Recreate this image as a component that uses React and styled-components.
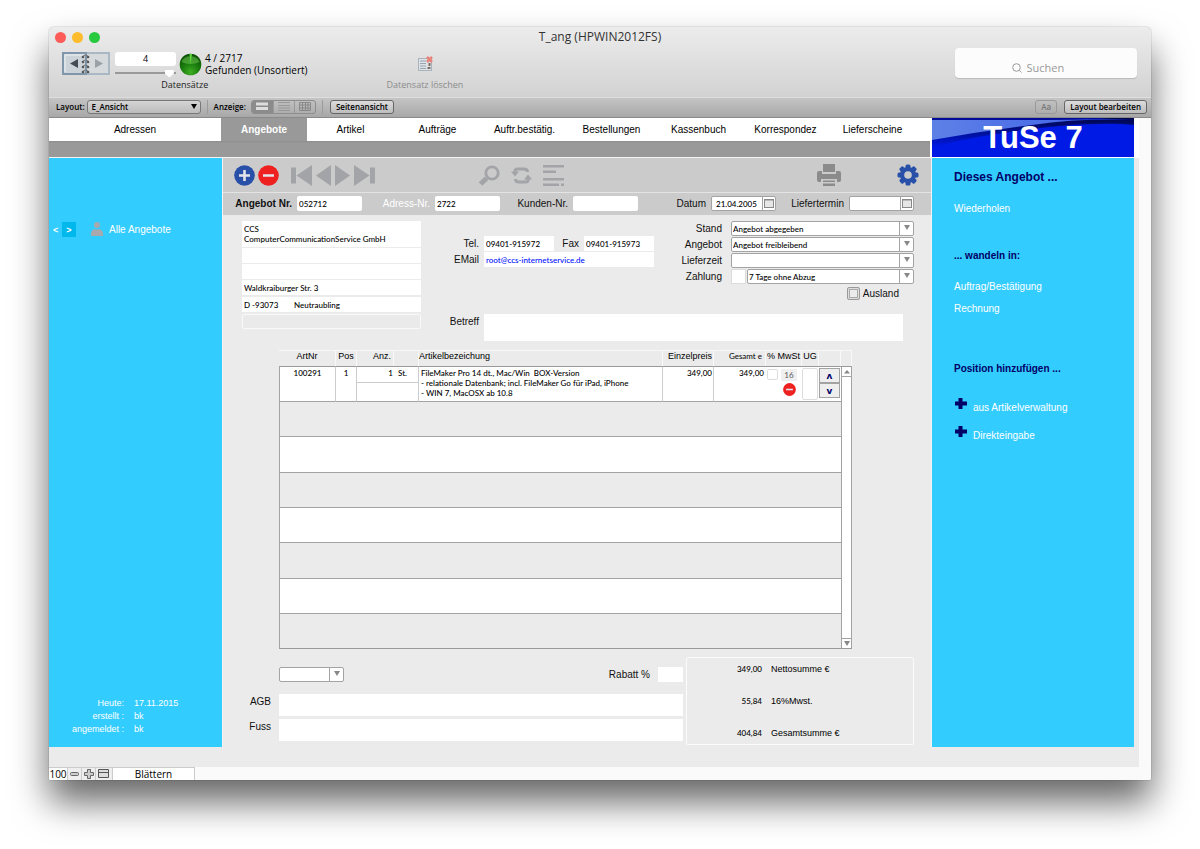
import React from 'react';
import styled, { createGlobalStyle, css } from 'styled-components';

const colors = {
  cyan: '#33ccff',
  navy: '#000066',
  panel: '#ebebeb',
  bar: '#cbcbcb',
  tab: '#999999',
  line: '#a3a3a3',
  icon: '#a3a4a7',
  blue: '#2850a8',
  red: '#ee2020',
};

const fonts = {
  label: '"Liberation Sans", Arial, sans-serif',
  field: 'Lato, "Open Sans", sans-serif',
  system: '"Open Sans", "Noto Sans", sans-serif',
};

const GlobalStyle = createGlobalStyle`
  * { box-sizing: border-box; }
  body {
    margin: 0;
    background: #fff;
    color: #000;
    font: 9px/12px ${fonts.label};
  }
  button, input, select, textarea {
    margin: 0;
    padding: 0;
    border: 0;
    border-radius: 0;
    outline: 0;
    background: none;
    color: inherit;
    font: inherit;
  }
  a { color: inherit; text-decoration: none; }
`;

const StyledPage = styled.div`
  padding: 27px 49px 69px;
`;
const StyledWindow = styled.div`
  overflow: hidden;
  border-radius: 5px 5px 2px 2px;
  background: ${colors.panel};
`;
const StyledShadow = styled.div`
  border-radius: 5px 5px 2px 2px;
  box-shadow: 0 0 1px rgba(0, 0, 0, 0.7), 0 22px 36px rgba(0, 0, 0, 0.6);
`;

/* window head */
const StyledHead = styled.header`
  height: 70px;
  background: linear-gradient(#ececec, #d2d2d2);
  font-family: ${fonts.system};
`;
const StyledTitleRow = styled.div`
  display: grid;
  grid-template-columns: 1fr auto 1fr;
  align-items: center;
  height: 20px;
  padding: 0 6px;
`;
const StyledLights = styled.div`
  display: flex;
  gap: 6px;
`;
const StyledLight = styled.button`
  width: 11px;
  height: 11px;
  border-radius: 50%;
  background: ${({ $color }) => $color};
`;
const StyledTitle = styled.h1`
  margin: 0;
  color: #333;
  font-size: 12px;
  font-weight: 400;
`;
const StyledTools = styled.div`
  display: flex;
  align-items: flex-start;
  padding: 4px 14px 0 13px;
`;
const StyledToolGroup = styled.div`
  display: flex;
  flex-direction: column;
  align-items: center;
  margin-right: 79px;
`;
const StyledToolRow = styled.div`
  display: flex;
  align-items: center;
  gap: 3px;
  height: 26px;
`;
const StyledToolLabel = styled.span`
  font-size: 9px;
  line-height: 16px;
  color: ${({ $muted }) => ($muted ? '#8c8c8c' : '#222')};
`;
const StyledRecord = styled.div`
  display: flex;
  flex-direction: column;
  gap: 3px;
  width: 61px;
  margin-left: 2px;
`;
const StyledRecordInput = styled.input`
  width: 100%;
  height: 14px;
  border-radius: 3px;
  background: #fff;
  text-align: center;
  font-size: 9px;
`;
const StyledRange = styled.input`
  width: 100%;
  height: 8px;
  appearance: none;
  &::-webkit-slider-runnable-track {
    height: 2px;
    background: #999;
  }
  &::-webkit-slider-thumb {
    appearance: none;
    width: 9px;
    height: 8px;
    margin-top: -2px;
    background: #fff;
    clip-path: polygon(0 0, 100% 0, 100% 50%, 50% 100%, 0 50%);
  }
`;
const StyledFound = styled.div`
  font-size: 10px;
  line-height: 12px;
`;
const StyledSearch = styled.label`
  display: flex;
  align-items: center;
  justify-content: center;
  gap: 5px;
  width: 182px;
  height: 30px;
  margin: -3px 0 0 auto;
  padding-top: 10px;
  border-radius: 4px;
  background: #fcfcfc;
  box-shadow: 0 1px 1px rgba(0, 0, 0, 0.15);
`;
const StyledSearchInput = styled.input`
  width: 54px;
  font-size: 11px;
  &::placeholder {
    color: #999;
  }
`;

/* layout bar */
const StyledLayoutBar = styled.div`
  display: flex;
  align-items: center;
  height: 21px;
  padding: 0 4px 2px 7px;
  border-top: 1px solid #dedede;
  border-bottom: 1px solid #8a8a8a;
  background: linear-gradient(#c4c4c4, #a8a8a8);
  font: 600 8px/12px ${fonts.system};
`;
const StyledLayoutSelect = styled.span`
  display: flex;
  align-items: center;
  width: 114px;
  height: 14px;
  margin-left: 2px;
  padding: 0 3px 0 4px;
  border: 1px solid #777;
  border-radius: 3px;
  background: linear-gradient(#d4d4d4, #bcbcbc);
  select {
    flex: 1;
    appearance: none;
  }
`;
const StyledDivider = styled.span`
  width: 1px;
  height: 14px;
  margin: 0 6px;
  background: #9b9b9b;
`;
const StyledSegments = styled.div`
  display: flex;
  height: 14px;
  margin-left: 5px;
  border: 1px solid #8d8d8d;
  border-radius: 3px;
  overflow: hidden;
`;
const StyledSegment = styled.button`
  display: flex;
  align-items: center;
  justify-content: center;
  width: 21px;
  background: ${({ $active }) => ($active ? '#8b8b8b' : 'transparent')};
  & + & {
    border-left: 1px solid #999;
  }
`;
const StyledBarButton = styled.button`
  height: 14px;
  margin-left: ${({ $left }) => $left || '1px'};
  padding: 0 5px;
  border: 1px solid ${({ $muted }) => ($muted ? '#999' : '#666')};
  border-radius: 3px;
  background: ${({ $muted }) => ($muted ? 'transparent' : 'linear-gradient(#dcdcdc, #bdbdbd)')};
  color: ${({ $muted }) => ($muted ? '#777' : '#000')};
  white-space: nowrap;
`;

/* workspace */
const StyledWorkspace = styled.div`
  display: grid;
  grid-template-columns: 173px 1fr 203px 5px 12px;
  grid-template-rows: 40px auto 20px;
`;
const StyledNav = styled.nav`
  grid-column: 1 / 3;
  display: flex;
  align-items: flex-start;
  border-bottom: 1px solid #f4f4f4;
  border-right: 1px solid #fff;
  background: linear-gradient(#fff 23px, #8d8d8d 23px, ${colors.tab} 25px);
`;
const StyledTab = styled.a`
  width: 87px;
  height: 23px;
  font-size: 10px;
  line-height: 23px;
  text-align: center;
  ${({ $wide }) => $wide && css`
    width: 172px;
  `}
  ${({ $active }) => $active && css`
    width: 86px;
    background: ${colors.tab};
    color: #fff;
    font-weight: 700;
  `}
`;
const StyledLogo = styled.div`
  position: relative;
  border-bottom: 1px solid #fff;
  border-left: 1px solid #fff;
  background: #001ae5;
  color: #fff;
  font-weight: 700;
  font-size: 31px;
  line-height: 39px;
  text-align: center;
  svg {
    position: absolute;
    inset: 0;
    width: 100%;
    height: 100%;
  }
  span {
    position: relative;
  }
`;
const StyledGutter = styled.div`
  background: #fff;
`;
const StyledScrollTrack = styled.div`
  grid-column: 5;
  grid-row: 1 / 4;
  background: #fafafa;
`;
const StyledSide = styled.aside`
  display: flex;
  flex-direction: column;
  background: ${colors.cyan};
  color: #fff;
`;
const StyledFilter = styled.div`
  display: flex;
  align-items: center;
  gap: 4px;
  margin-top: 64px;
  padding-left: 4px;
  font-size: 10px;
`;
const StyledStep = styled.button`
  width: ${({ $active }) => ($active ? '14px' : '5px')};
  height: 15px;
  background: ${({ $active }) => ($active ? '#00b8ec' : 'transparent')};
  font-size: 9px;
  font-weight: 700;
`;
const StyledFilterLink = styled.a`
  display: flex;
  align-items: center;
  gap: 6px;
  margin-left: 11px;
`;
const StyledSession = styled.dl`
  display: grid;
  grid-template-columns: 75px 1fr;
  gap: 1px 10px;
  margin: auto 0 12px;
  dt { text-align: right; }
  dd { margin: 0; }
`;
const StyledActions = styled(StyledSide)`
  align-items: flex-start;
  padding-left: 22px;
  border-left: 1px solid #f4f4f4;
  font-size: 10px;
`;
const StyledActionTitle = styled.h2`
  margin: ${({ $top }) => $top} 0 0;
  color: ${colors.navy};
  font-size: ${({ $large }) => ($large ? '12px' : '10px')};
  line-height: 14px;
`;
const StyledAction = styled.a`
  display: flex;
  align-items: flex-end;
  gap: 6px;
  margin-top: ${({ $top }) => $top};
  line-height: 12px;
`;

/* record form */
const StyledMain = styled.main`
  min-width: 0;
  border-left: 1px solid #f4f4f4;
  background: ${colors.panel};
`;
const StyledIconBar = styled.div`
  display: flex;
  align-items: center;
  height: 35px;
  padding: 0 12px 0 11px;
  border-bottom: 1px solid #e4e4e4;
  background: ${colors.bar};
`;
const StyledIconGroup = styled.div`
  display: flex;
  align-items: center;
  gap: ${({ $gap }) => $gap};
  margin-left: ${({ $left }) => $left || '0'};
`;
const StyledIconButton = styled.button`
  display: flex;
`;
const StyledKeyBar = styled.div`
  display: grid;
  grid-template-columns: 69px 65px 63px 65px 63px 65px 1fr 65px 63px 65px;
  column-gap: 5px;
  align-items: start;
  height: 22px;
  padding: 3px 17px 0 0;
  background: ${colors.bar};
`;
const StyledLabel = styled.label`
  flex: none;
  color: ${({ $light }) => ($light ? '#fff' : '#111')};
  font-size: 10px;
  font-weight: ${({ $strong }) => ($strong ? 700 : 400)};
  line-height: 15px;
  text-align: right;
  white-space: nowrap;
`;
const fieldText = css`
  font-family: ${fonts.field};
  font-size: 8px;
  font-weight: 500;
`;
const StyledInput = styled.input`
  ${fieldText}
  width: 100%;
  min-width: 0;
  height: ${({ $height }) => $height || '15px'};
  padding: 0 2px;
  border-radius: ${({ $round }) => ($round ? '2px' : '0')};
  background: #fff;
  color: ${({ $link }) => ($link ? '#0011ff' : '#000')};
`;
const StyledCombo = styled.span`
  ${fieldText}
  display: flex;
  flex: 1;
  min-width: 0;
  height: 15px;
  border: 1px solid ${colors.line};
  border-radius: 2px;
  background: #fff;
  select {
    flex: 1;
    min-width: 0;
    padding-left: 1px;
    appearance: none;
  }
`;
const StyledComboEnd = styled.span`
  display: flex;
  justify-content: center;
  flex: none;
  width: 14px;
  padding-top: 3px;
  border-left: 1px solid ${colors.line};
`;
const StyledDateInput = styled.input`
  width: 50px;
  min-width: 0;
  padding-left: 4px;
`;
const StyledDateButton = styled.button`
  display: flex;
  align-items: center;
  justify-content: center;
  flex: 1;
  border-left: 1px solid ${colors.line};
`;
const StyledForm = styled.section`
  display: flex;
  padding: 6px 17px 0 19px;
`;
const StyledAddress = styled.div`
  display: flex;
  flex: none;
  flex-direction: column;
  gap: 1px;
  width: 179px;
`;
const StyledAddressText = styled.textarea`
  ${fieldText}
  height: 26px;
  padding: 3px 2px;
  background: #fff;
  line-height: 10px;
  resize: none;
  overflow: hidden;
`;
const StyledTown = styled.div`
  display: grid;
  grid-template-columns: 50px 1fr;
  margin: 1px 0;
  background: #fff;
`;
const StyledExtra = styled(StyledInput)`
  border: 1px solid #f9f9f9;
  border-radius: 2px;
  background: #eaeaea;
`;
const StyledDetails = styled.div`
  display: flex;
  flex-direction: column;
  flex: 1;
`;
const StyledDetailsTop = styled.div`
  display: flex;
  justify-content: space-between;
  height: 93px;
`;
const StyledContact = styled.div`
  display: grid;
  grid-template-columns: 58px 70px 20px 70px;
  gap: 1px 5px;
  align-content: start;
  padding-top: 15px;
`;
const StyledWide = styled.div`
  grid-column: 2 / 5;
`;
const StyledTerms = styled.div`
  display: grid;
  grid-template-columns: auto 183px;
  gap: 1px 9px;
  align-content: start;
`;
const StyledPayment = styled.div`
  display: flex;
  gap: 1px;
`;
const StyledShort = styled(StyledInput)`
  width: 15px;
  border: 1px solid #ddd;
`;
const StyledAbroad = styled.div`
  grid-column: 2;
  display: flex;
  align-items: center;
  gap: 3px;
  padding: 1px 15px 0 0;
  justify-content: flex-end;
`;
const StyledCheckbox = styled.input`
  width: ${({ $small }) => ($small ? '11px' : '13px')};
  height: ${({ $small }) => ($small ? '11px' : '13px')};
  appearance: none;
  border: ${({ $small }) => ($small ? '1px solid #ddd' : '1px solid #999')};
  border-radius: 2px;
  box-shadow: ${({ $small }) => ($small ? 'none' : 'inset 0 0 0 1px #ddd, inset 0 0 0 2px #aaa')};
`;
const StyledSubject = styled.div`
  display: flex;
  gap: 5px;
  padding-right: 11px;
  label {
    width: 58px;
  }
`;

/* positions */
const StyledPositions = styled.div`
  margin: 9px 79px 0 56px;
`;
const StyledTable = styled.table`
  width: 100%;
  border-spacing: 0;
  table-layout: fixed;
`;
const StyledTh = styled.th`
  width: ${({ $width }) => $width};
  height: 16px;
  padding: 0 ${({ $right }) => $right || '0'} 0 0;
  border: solid #f8f8f8;
  border-width: 1px 1px 0 0;
  font-weight: 400;
  font-size: 9px;
  line-height: 11px;
  text-align: ${({ $align }) => $align || 'center'};
  vertical-align: top;
  white-space: nowrap;
  ${({ $field }) => $field && css`
    font-family: ${fonts.field};
    font-size: 8px;
  `}
`;
const StyledTd = styled.td`
  ${fieldText}
  height: 100%;
  padding: ${({ $pad }) => $pad || '0'};
  border-bottom: 1px solid ${colors.line};
  line-height: 10px;
  text-align: ${({ $align }) => $align || 'left'};
  vertical-align: top;
  white-space: pre-line;
  ${({ $rule }) => $rule && css`
    border-right: 1px solid #ccc;
  `}
`;
const StyledRow = styled.tr`
  height: 35px;
  background: #fff;
  &:nth-child(even) {
    background: ${colors.panel};
  }
  &:first-child,
  &:nth-child(3n) {
    height: 36px;
  }
  td:first-child {
    border-left: 1px solid ${colors.line};
  }
  &:first-child td {
    border-top: 1px solid #999;
  }
  &:last-child td {
    border-bottom: 1px solid #999;
  }
`;
const StyledScrollCell = styled.td`
  padding: 0;
  border: solid ${colors.line};
  border-width: 0 1px;
  background: #fff;
  vertical-align: ${({ $end }) => ($end ? 'bottom' : 'top')};
`;
const StyledScrollButton = styled.button`
  display: flex;
  align-items: center;
  justify-content: center;
  width: 100%;
  height: 10px;
  border: solid ${colors.line};
  border-width: ${({ $end }) => ($end ? '1px 0 0' : '0 0 1px')};
`;
const StyledHalf = styled.div`
  height: 16px;
  padding: ${({ $pad }) => $pad};
  border-bottom: 1px solid #ccc;
`;
const StyledTax = styled.div`
  display: grid;
  grid-template-columns: 11px 16px;
  gap: 2px 3px;
  justify-items: center;
  padding: 2px 0 0 1px;
`;
const StyledRate = styled.span`
  width: 100%;
  background: #efefef;
  color: #666;
  line-height: 12px;
  text-align: center;
`;
const StyledRemove = styled.button`
  grid-column: 2;
  display: flex;
`;
const StyledGroupInput = styled.input`
  display: block;
  width: 16px;
  height: 32px;
  margin-top: 1px;
  border: 1px solid #ddd;
  border-radius: 2px;
`;
const StyledMove = styled.button`
  display: block;
  width: 21px;
  height: 15px;
  border: 1px solid ${colors.line};
  background: #eee;
  color: ${colors.navy};
  font: 700 9px/12px "DejaVu Sans", sans-serif;
`;

/* totals */
const StyledFooter = styled.section`
  display: flex;
  gap: 3px;
  margin-top: 8px;
  padding: 0 17px 2px 0;
`;
const StyledNotes = styled.div`
  display: grid;
  grid-template-columns: 48px 1fr;
  gap: 3px 8px;
  flex: 1;
  align-content: start;
  padding-top: 10px;
`;
const StyledDiscount = styled.div`
  grid-column: 2;
  display: flex;
  align-items: center;
  justify-content: space-between;
  margin-bottom: 9px;
`;
const StyledUnitCombo = styled(StyledCombo)`
  flex: none;
  width: 65px;
`;
const StyledRebate = styled.div`
  display: flex;
  gap: 8px;
  input {
    width: 25px;
  }
`;
const StyledTotals = styled.dl`
  width: 228px;
  height: 88px;
  margin: 0;
  padding-top: 5px;
  border: 1px solid #fbfbfb;
  border-radius: 2px;
`;
const StyledTotal = styled.div`
  display: flex;
  flex-direction: row-reverse;
  gap: 9px;
  height: 32px;
  line-height: 13px;
  dt {
    flex: 1;
  }
  dd {
    ${fieldText}
    width: 75px;
    margin: 0;
    text-align: right;
  }
`;

/* status bar */
const StyledStatus = styled.footer`
  display: flex;
  height: 13px;
  background: #fafafa;
  font: 10px/14px ${fonts.system};
`;
const StyledStatusCell = styled.span`
  display: flex;
  align-items: center;
  justify-content: center;
  width: ${({ $width }) => $width};
  border: solid #ccc;
  border-width: 1px 1px 0 0;
  background: ${({ $white }) => ($white ? '#fff' : '#eee')};
`;

const Book = () => (
  <svg width="48" height="24" viewBox="0 0 48 24">
    <rect x="1" y="1" width="46" height="21" fill="#d6dadd" stroke="#a9b8c4" strokeWidth="2" />
    <rect x="1" y="1" width="23" height="21" fill="#ccd3d9" stroke="#8097ab" strokeWidth="2" />
    <path d="M3 20V3h19" fill="none" stroke="#eef2f5" />
    <path d="M8 11.500l8-4.500v9z" fill="#444c55" />
    <path d="M41 11.500l-8-4.500v9z" fill="#9aa1a7" />
    {[5, 10, 15, 20].map((y) => (
      <g key={y} fill="#555">
        <circle cx="21" cy={y} r="1.300" />
        <circle cx="26" cy={y} r="1.300" />
        <path d={`M21 ${y - 1}q2.500-2 5 0`} fill="none" stroke="#777" />
      </g>
    ))}
  </svg>
);

const FoundBall = () => (
  <svg width="23" height="23" viewBox="0 0 23 23">
    <defs>
      <radialGradient id="ball" cx="50%" cy="85%" r="80%">
        <stop offset="0" stopColor="#3fae24" />
        <stop offset="0.5" stopColor="#1b7e0d" />
        <stop offset="1" stopColor="#0b5206" />
      </radialGradient>
    </defs>
    <circle cx="11.500" cy="11.500" r="10.800" fill="url(#ball)" />
    <path d="M2.500 9a9.500 8.500 0 0 1 18 0q-9 4-18 0z" fill="#7fd860" opacity="0.45" />
    <path d="M10.500 1l1 10.500L13 1z" fill="#5fd83c" />
  </svg>
);

const DeleteRecord = () => (
  <svg width="16" height="16" viewBox="0 0 16 16">
    <rect x="1.500" y="2.500" width="13" height="12" fill="#dde3e8" stroke="#a9b3bb" />
    <path d="M3 5h6M3 7.500h6M3 10h6M3 12.500h6" stroke="#98a4ae" />
    <path d="M10 1l5 5M15 1l-5 5" stroke="#e8827a" strokeWidth="2.500" />
    <path d="M12.500 7v3M10.500 12h3" stroke="#7a6a60" strokeWidth="2" />
  </svg>
);

const SearchGlyph = () => (
  <svg width="10" height="10" viewBox="0 0 10 10" fill="none" stroke="#999">
    <circle cx="4.500" cy="4.500" r="3.800" />
    <path d="M7.300 7.300L9.500 9.500" />
  </svg>
);

const Circle = ({ size, color, plus }) => (
  <svg width={size} height={size} viewBox="0 0 21 21">
    <circle cx="10.500" cy="10.500" r="10.300" fill={color} />
    <path d={plus ? 'M5 10.500h11M10.500 5v11' : 'M5 10.500h11'} stroke="#e3e3ea" strokeWidth="2.600" />
  </svg>
);

const Shape = ({ width, height = 21, d, color = colors.icon }) => (
  <svg width={width} height={height} viewBox={`0 0 ${width} ${height}`}>
    <path d={d} fill={color} fillRule="evenodd" />
  </svg>
);

const Magnifier = () => (
  <svg width="21" height="21" viewBox="0 0 21 21" fill="none" stroke={colors.icon}>
    <circle cx="13" cy="8" r="6.200" strokeWidth="2.800" />
    <path d="M9 12l-1.500 1.500" strokeWidth="3" />
    <path d="M7.500 13.500l-6 5.500" strokeWidth="5" />
  </svg>
);

const Refresh = () => (
  <svg width="21" height="21" viewBox="0 0 21 21" fill="none" stroke={colors.icon}>
    <path d="M4 8V6q0-2 2.500-2H13q3.500 0 3.500 3M17 13v2q0 2-2.500 2H8q-3.500 0-3.500-3" strokeWidth="3" />
    <path d="M0 6.500h8L4 11.500zM13 14.500h8L17 9.500z" fill={colors.icon} stroke="none" />
  </svg>
);

const Gear = () => (
  <svg width="22" height="22" viewBox="0 0 22 22">
    {[0, 45, 90, 135].map((angle) => (
      <rect key={angle} x="8.500" y="0.500" width="5" height="21" rx="1.500" fill={colors.blue} transform={`rotate(${angle} 11 11)`} />
    ))}
    <circle cx="11" cy="11" r="8" fill={colors.blue} />
    <circle cx="11" cy="11" r="3.800" fill={colors.bar} />
  </svg>
);

const Arrow = ({ color = '#888', up }) => (
  <svg width="6" height="5" viewBox="0 0 6 5">
    <path d={up ? 'M0 4.500h6L3 1z' : 'M0 0h6L3 5z'} fill={color} />
  </svg>
);

const plusPath = 'M4.500 0h4v3.500H13v4H8.500V11h-4V7.500H1v-4h3.500z';

const tabs = ['Artikel', 'Aufträge', 'Auftr.bestätig.', 'Bestellungen', 'Kassenbuch', 'Korrespondez', 'Lieferscheine'];

const totals = [
  { label: 'Nettosumme €', value: '349,00' },
  { label: '16%Mwst.', value: '55,84' },
  { label: 'Gesamtsumme €', value: '404,84' },
];

const Combo = ({ id, value }) => (
  <StyledCombo>
    <select id={id} defaultValue={value}>
      <option>{value}</option>
    </select>
    <StyledComboEnd><Arrow /></StyledComboEnd>
  </StyledCombo>
);

const DateField = ({ id, value }) => (
  <StyledCombo>
    <StyledDateInput id={id} defaultValue={value} />
    <StyledDateButton aria-label="Kalender">
      <svg width="10" height="9" viewBox="0 0 10 9">
        <rect x="0.500" y="0.500" width="9" height="8" fill="#e6e6e6" stroke="#888" />
        <path d="M1 1.500h8" stroke="#bbb" />
      </svg>
    </StyledDateButton>
  </StyledCombo>
);

const WindowHead = () => (
  <StyledHead>
    <StyledTitleRow>
      <StyledLights>
        <StyledLight $color="#fc5b57" aria-label="Schließen" />
        <StyledLight $color="#fdbc2e" aria-label="Minimieren" />
        <StyledLight $color="#27c93f" aria-label="Zoomen" />
      </StyledLights>
      <StyledTitle>T_ang (HPWIN2012FS)</StyledTitle>
    </StyledTitleRow>
    <StyledTools>
      <StyledToolGroup>
        <StyledToolRow>
          <Book />
          <StyledRecord>
            <StyledRecordInput aria-label="Datensatz" defaultValue="4" />
            <StyledRange type="range" aria-label="Position" defaultValue="96" />
          </StyledRecord>
          <FoundBall />
          <StyledFound>
            4 / 2717
            <br />
            Gefunden (Unsortiert)
          </StyledFound>
        </StyledToolRow>
        <StyledToolLabel>Datensätze</StyledToolLabel>
      </StyledToolGroup>
      <StyledToolGroup>
        <StyledToolRow><DeleteRecord /></StyledToolRow>
        <StyledToolLabel $muted>Datensatz löschen</StyledToolLabel>
      </StyledToolGroup>
      <StyledSearch>
        <SearchGlyph />
        <StyledSearchInput placeholder="Suchen" aria-label="Suchen" />
      </StyledSearch>
    </StyledTools>
  </StyledHead>
);

const LayoutBar = () => (
  <StyledLayoutBar>
    <label htmlFor="layout">Layout:</label>
    <StyledLayoutSelect>
      <select id="layout" defaultValue="E_Ansicht"><option>E_Ansicht</option></select>
      <Arrow color="#000" />
    </StyledLayoutSelect>
    <StyledDivider />
    <span>Anzeige:</span>
    <StyledSegments>
      <StyledSegment $active aria-label="Formular">
        <svg width="12" height="9"><path d="M0 2h12M0 6.500h12" stroke="#ddd" strokeWidth="3" /></svg>
      </StyledSegment>
      <StyledSegment aria-label="Liste">
        <svg width="12" height="9"><path d="M0 .5h12M0 3.500h12M0 6h12M0 8.500h12" stroke="#999" /></svg>
      </StyledSegment>
      <StyledSegment aria-label="Tabelle">
        <svg width="12" height="9"><path d="M.5 .5h11v8H.5zM0 3h12M0 6h12M3.500 0v9M6.500 0v9M9 0v9" fill="none" stroke="#888" /></svg>
      </StyledSegment>
    </StyledSegments>
    <StyledDivider />
    <StyledBarButton>Seitenansicht</StyledBarButton>
    <StyledBarButton $muted $left="auto">Aa</StyledBarButton>
    <StyledBarButton $left="7px">Layout bearbeiten</StyledBarButton>
  </StyledLayoutBar>
);

const IconBar = () => (
  <StyledIconBar>
    <StyledIconGroup $gap="3px">
      <StyledIconButton aria-label="Neu"><Circle size={21} color={colors.blue} plus /></StyledIconButton>
      <StyledIconButton aria-label="Löschen"><Circle size={21} color={colors.red} /></StyledIconButton>
    </StyledIconGroup>
    <StyledIconGroup $gap="4px" $left="12px">
      <StyledIconButton aria-label="Erster"><Shape width={21} d="M0 2.500h5v16H0zM21 0v21L5.500 10.500z" /></StyledIconButton>
      <StyledIconButton aria-label="Zurück"><Shape width={15} d="M15 0v21L0 10.500z" /></StyledIconButton>
      <StyledIconButton aria-label="Weiter"><Shape width={15} d="M0 0v21l15-10.500z" /></StyledIconButton>
      <StyledIconButton aria-label="Letzter"><Shape width={21} d="M16 2.500h5v16h-5zM0 0v21l15.500-10.500z" /></StyledIconButton>
    </StyledIconGroup>
    <StyledIconGroup $gap="11px" $left="104px">
      <StyledIconButton aria-label="Suchen"><Magnifier /></StyledIconButton>
      <StyledIconButton aria-label="Aktualisieren"><Refresh /></StyledIconButton>
      <StyledIconButton aria-label="Liste">
        <Shape width={21} d="M0 0h21v2.500H0zM0 5.500h13V8H0zM0 13h21v2.500H0zM0 18.500h16V21H0zM18 18.500h3V21h-3z" />
      </StyledIconButton>
    </StyledIconGroup>
    <StyledIconGroup $gap="56px" $left="auto">
      <StyledIconButton aria-label="Drucken">
        <Shape width={24} height={22} color="#8b8b8b" d="M6 0h12v8H6zM2 7h3v3h14V7h3q2 0 2 2v7q0 2-2 2h-2v-3H4v3H2q-2 0-2-2V9q0-2 2-2zM6 16.500h12V18H6zM6 19.500h12V22H6z" />
      </StyledIconButton>
      <StyledIconButton aria-label="Einstellungen"><Gear /></StyledIconButton>
    </StyledIconGroup>
  </StyledIconBar>
);

const KeyBar = () => (
  <StyledKeyBar>
    <StyledLabel htmlFor="angebotNr" $strong>Angebot Nr.</StyledLabel>
    <StyledInput id="angebotNr" defaultValue="052712" $round />
    <StyledLabel htmlFor="adressNr" $light>Adress-Nr.</StyledLabel>
    <StyledInput id="adressNr" defaultValue="2722" $round />
    <StyledLabel htmlFor="kundenNr">Kunden-Nr.</StyledLabel>
    <StyledInput id="kundenNr" $round />
    <StyledLabel htmlFor="datum">Datum</StyledLabel>
    <DateField id="datum" value="21.04.2005" />
    <StyledLabel htmlFor="termin">Liefertermin</StyledLabel>
    <DateField id="termin" value="" />
  </StyledKeyBar>
);

const RecordForm = () => (
  <StyledForm>
    <StyledAddress>
      <StyledAddressText aria-label="Firma" defaultValue={'CCS\nComputerCommunicationService GmbH'} />
      <StyledInput aria-label="Zusatz" />
      <StyledInput aria-label="Name" />
      <StyledInput aria-label="Straße" defaultValue="Waldkraiburger Str. 3" />
      <StyledTown>
        <StyledInput aria-label="PLZ" defaultValue="D -93073" />
        <StyledInput aria-label="Ort" defaultValue="Neutraubling" />
      </StyledTown>
      <StyledExtra aria-label="Land" />
    </StyledAddress>
    <StyledDetails>
      <StyledDetailsTop>
        <StyledContact>
          <StyledLabel htmlFor="tel">Tel.</StyledLabel>
          <StyledInput id="tel" defaultValue="09401-915972" />
          <StyledLabel htmlFor="fax">Fax</StyledLabel>
          <StyledInput id="fax" defaultValue="09401-915973" />
          <StyledLabel htmlFor="email">EMail</StyledLabel>
          <StyledWide>
            <StyledInput id="email" defaultValue="root@ccs-internetservice.de" $link />
          </StyledWide>
        </StyledContact>
        <StyledTerms>
          <StyledLabel htmlFor="stand">Stand</StyledLabel>
          <Combo id="stand" value="Angebot abgegeben" />
          <StyledLabel htmlFor="angebot">Angebot</StyledLabel>
          <Combo id="angebot" value="Angebot freibleibend" />
          <StyledLabel htmlFor="lieferzeit">Lieferzeit</StyledLabel>
          <Combo id="lieferzeit" value="" />
          <StyledLabel htmlFor="zahlung">Zahlung</StyledLabel>
          <StyledPayment>
            <StyledShort aria-label="Zahlungscode" />
            <Combo id="zahlung" value="7 Tage ohne Abzug" />
          </StyledPayment>
          <StyledAbroad>
            <StyledCheckbox type="checkbox" id="ausland" />
            <StyledLabel htmlFor="ausland">Ausland</StyledLabel>
          </StyledAbroad>
        </StyledTerms>
      </StyledDetailsTop>
      <StyledSubject>
        <StyledLabel htmlFor="betreff">Betreff</StyledLabel>
        <StyledInput id="betreff" $height="27px" />
      </StyledSubject>
    </StyledDetails>
  </StyledForm>
);

const Positions = () => (
  <StyledPositions>
    <StyledTable>
      <thead>
        <tr>
          <StyledTh $width="57px">ArtNr</StyledTh>
          <StyledTh $width="21px">Pos</StyledTh>
          <StyledTh $width="37px" $align="right" $right="2px">Anz.</StyledTh>
          <StyledTh $width="25px" />
          <StyledTh $align="left">Artikelbezeichung</StyledTh>
          <StyledTh $width="51px" $align="right" $right="1px">Einzelpreis</StyledTh>
          <StyledTh $width="52px" $align="right" $right="3px" $field>Gesamt e</StyledTh>
          <StyledTh $width="36px">% MwSt</StyledTh>
          <StyledTh $width="17px">UG</StyledTh>
          <StyledTh $width="22px" />
          <StyledTh $width="11px" />
        </tr>
      </thead>
      <tbody>
        <StyledRow>
          <StyledTd $align="center" $pad="1px 0" $rule>100291</StyledTd>
          <StyledTd $align="center" $pad="1px 0" $rule>1</StyledTd>
          <StyledTd $align="right"><StyledHalf $pad="1px 1px 0 0">1</StyledHalf></StyledTd>
          <StyledTd $rule><StyledHalf $pad="1px 0 0 4px">St.</StyledHalf></StyledTd>
          <StyledTd $pad="1px 0 0 2px" $rule>
            {'FileMaker Pro 14 dt., Mac/Win\u00a0 BOX-Version\n- relationale Datenbank; incl. FileMaker Go für iPad, iPhone\n- WIN 7, MacOSX ab 10.8'}
          </StyledTd>
          <StyledTd $align="right" $pad="1px 1px" $rule>349,00</StyledTd>
          <StyledTd $align="right" $pad="1px 2px">349,00</StyledTd>
          <StyledTd>
            <StyledTax>
              <StyledCheckbox type="checkbox" aria-label="Rabatt" $small />
              <StyledRate>16</StyledRate>
              <StyledRemove aria-label="Position löschen"><Circle size={13} color={colors.red} /></StyledRemove>
            </StyledTax>
          </StyledTd>
          <StyledTd><StyledGroupInput aria-label="UG" /></StyledTd>
          <StyledTd $pad="1px 0 0">
            <StyledMove aria-label="Nach oben">ʌ</StyledMove>
            <StyledMove aria-label="Nach unten">v</StyledMove>
          </StyledTd>
          <StyledScrollCell>
            <StyledScrollButton aria-label="Hoch"><Arrow up /></StyledScrollButton>
          </StyledScrollCell>
        </StyledRow>
        {[2, 3, 4, 5, 6, 7, 8].map((row) => (
          <StyledRow key={row}>
            <StyledTd colSpan={10} />
            <StyledScrollCell $end>
              {row === 8 && <StyledScrollButton aria-label="Runter" $end><Arrow /></StyledScrollButton>}
            </StyledScrollCell>
          </StyledRow>
        ))}
      </tbody>
    </StyledTable>
  </StyledPositions>
);

const Totals = () => (
  <StyledFooter>
    <StyledNotes>
      <StyledDiscount>
        <StyledUnitCombo>
          <select aria-label="Auswahl" />
          <StyledComboEnd><Arrow /></StyledComboEnd>
        </StyledUnitCombo>
        <StyledRebate>
          <StyledLabel htmlFor="rabatt">Rabatt %</StyledLabel>
          <StyledInput id="rabatt" />
        </StyledRebate>
      </StyledDiscount>
      <StyledLabel htmlFor="agb">AGB</StyledLabel>
      <StyledInput id="agb" $height="22px" />
      <StyledLabel htmlFor="fuss">Fuss</StyledLabel>
      <StyledInput id="fuss" $height="22px" />
    </StyledNotes>
    <StyledTotals>
      {totals.map(({ label, value }) => (
        <StyledTotal key={label}>
          <dt>{label}</dt>
          <dd>{value}</dd>
        </StyledTotal>
      ))}
    </StyledTotals>
  </StyledFooter>
);

const Actions = () => (
  <StyledActions>
    <StyledActionTitle $top="12px" $large>Dieses Angebot ...</StyledActionTitle>
    <StyledAction href="#wiederholen" $top="19px">Wiederholen</StyledAction>
    <StyledActionTitle $top="34px">... wandeln in:</StyledActionTitle>
    <StyledAction href="#auftrag" $top="18px">Auftrag/Bestätigung</StyledAction>
    <StyledAction href="#rechnung" $top="10px">Rechnung</StyledAction>
    <StyledActionTitle $top="47px">Position hinzufügen ...</StyledActionTitle>
    <StyledAction href="#artikel" $top="22px">
      <Shape width={13} height={16} color={colors.navy} d={plusPath} />
      aus Artikelverwaltung
    </StyledAction>
    <StyledAction href="#direkt" $top="12px">
      <Shape width={13} height={16} color={colors.navy} d={plusPath} />
      Direkteingabe
    </StyledAction>
  </StyledActions>
);

const App = () => (
  <StyledPage>
    <GlobalStyle />
    <StyledShadow>
      <StyledWindow>
        <WindowHead />
        <LayoutBar />
        <StyledWorkspace>
          <StyledNav>
            <StyledTab href="#adressen" $wide>Adressen</StyledTab>
            <StyledTab href="#angebote" $active>Angebote</StyledTab>
            {tabs.map((tab) => <StyledTab key={tab} href={`#${tab}`}>{tab}</StyledTab>)}
          </StyledNav>
          <StyledLogo>
            <svg viewBox="0 0 202 39" preserveAspectRatio="none">
              <defs>
                <linearGradient id="wave" x1="0" x2="1">
                  <stop offset="0" stopColor="#5d80e6" />
                  <stop offset="0.6" stopColor="#4a6ce8" />
                  <stop offset="1" stopColor="#0d25e0" />
                </linearGradient>
                <linearGradient id="shade" x1="0" x2="0" y1="0" y2="1">
                  <stop offset="0" stopColor="#00064a" />
                  <stop offset="1" stopColor="#001ae5" />
                </linearGradient>
              </defs>
              <path d="M0 19C50 12 100 1 150 0H202V7C150 2 60 14 0 29z" fill="url(#shade)" />
              <path d="M0 2H110Q160-1 202 2 150 0 100 7 50 13 0 22z" fill="url(#wave)" />
              <path d="M0 1h110q30 0 60-1" fill="none" stroke="#000c98" strokeWidth="2" />
            </svg>
            <span>TuSe 7</span>
          </StyledLogo>
          <StyledGutter />
          <StyledScrollTrack />
          <StyledSide>
            <StyledFilter>
              <StyledStep aria-label="Zurück">&lt;</StyledStep>
              <StyledStep aria-label="Weiter" $active>&gt;</StyledStep>
              <StyledFilterLink href="#alle">
                <Shape width={12} height={15} color="#a9a9ad" d="M3 3a3 3 0 0 1 6 0a3 3 0 0 1-6 0zM0 14v-2q0-4 4-5q2 1 4 0q4 1 4 5v2z" />
                Alle Angebote
              </StyledFilterLink>
            </StyledFilter>
            <StyledSession>
              <dt>Heute:</dt>
              <dd>17.11.2015</dd>
              <dt>erstellt :</dt>
              <dd>bk</dd>
              <dt>angemeldet :</dt>
              <dd>bk</dd>
            </StyledSession>
          </StyledSide>
          <StyledMain>
            <IconBar />
            <KeyBar />
            <RecordForm />
            <Positions />
            <Totals />
          </StyledMain>
          <Actions />
        </StyledWorkspace>
        <StyledStatus>
          <StyledStatusCell $width="19px" $white>100</StyledStatusCell>
          <StyledStatusCell $width="14px">
            <svg width="10" height="10"><rect x="0.500" y="3.500" width="8" height="3" rx="1" fill="#ccc" stroke="#666" /></svg>
          </StyledStatusCell>
          <StyledStatusCell $width="14px">
            <svg width="10" height="10"><path d="M3.500 .5h3v3h3v3h-3v3h-3v-3h-3v-3h3z" fill="#ccc" stroke="#666" /></svg>
          </StyledStatusCell>
          <StyledStatusCell $width="17px">
            <svg width="12" height="10"><path d="M.5 .5h10v8H.5zM.5 3.500h10" fill="#ddd" stroke="#555" /></svg>
          </StyledStatusCell>
          <StyledStatusCell $width="82px" $white>Blättern</StyledStatusCell>
        </StyledStatus>
      </StyledWindow>
    </StyledShadow>
  </StyledPage>
);

export default App;
